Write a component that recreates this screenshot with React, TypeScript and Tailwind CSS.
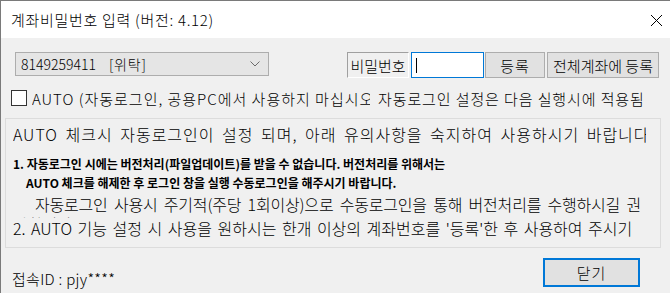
import React from "react";

const font = { fontFamily: '"Noto Sans CJK KR", "Liberation Sans", sans-serif' };

export default function App() {
  return (
    <div
      className="w-[670px] h-[293px] overflow-hidden bg-[#f0f0f0] border-l border-t border-[#7a7a7a] text-[#000] flex flex-col relative font-light"
      style={font}
    >
      {/* title bar */}
      <div className="h-[37px] bg-white flex items-center justify-between pl-[10px] pr-[7px] shrink-0">
        <span className="text-[15px] leading-none tracking-[0.7px] text-[#000]">계좌비밀번호 입력 (버전: 4.12)</span>
        <svg width="13" height="13" viewBox="0 0 13 13" className="mt-[1px]">
          <path d="M1 1 L12 12 M12 1 L1 12" stroke="#000" strokeWidth="1" />
        </svg>
      </div>

      {/* row 1 */}
      <div className="flex items-start mt-[14px] h-[25px] pl-[14px]">
        <div className="w-[254px] h-[24px] bg-[#e5e5e5] border border-[#adadad] flex items-center justify-between pl-[5px] pr-[8px]">
          <span className="text-[14px] leading-none whitespace-nowrap">
            8149259411<span className="ml-[13px] tracking-[0.8px]">[위탁]</span>
          </span>
          <svg width="10" height="6" viewBox="0 0 10 6">
            <path d="M0.5 0.5 L5 5 L9.5 0.5" stroke="#6b6b6b" strokeWidth="1" fill="none" />
          </svg>
        </div>
        <div className="ml-[78px] w-[62px] h-[26px] border-t border-l border-[#a0a0a0] border-b border-r border-b-white border-r-white bg-[#f0f0f0] flex items-center justify-center">
          <span className="text-[15px] leading-none tracking-[0px] whitespace-nowrap">비밀번호</span>
        </div>
        <div className="ml-[2px] w-[73px] h-[26px] bg-white border border-[#0078d7] flex items-center pl-[4px]">
          <div className="w-[1px] h-[15px] bg-black" />
        </div>
        <button className="ml-[1px] w-[60px] h-[26px] bg-[#e1e1e1] border border-[#adadad] flex items-center justify-center">
          <span className="text-[15px] leading-none tracking-[1px]">등록</span>
        </button>
        <button className="ml-[2px] w-[112px] h-[26px] bg-[#e1e1e1] border border-[#adadad] flex items-center justify-center">
          <span className="text-[15px] leading-none whitespace-nowrap tracking-[0px]">전체계좌에 등록</span>
        </button>
      </div>

      {/* checkbox row */}
      <div className="flex items-center mt-[12px] h-[17px] pl-[10px]">
        <div className="w-[16px] h-[16px] bg-white border border-[#333] shrink-0" />
        <div className="ml-[5px] w-[338px] overflow-hidden whitespace-nowrap">
          <span className="text-[15px] leading-none tracking-[1px]">AUTO (자동로그인, 공용PC에서 사용하지 마십시오)</span>
        </div>
        <div className="ml-[8px] whitespace-nowrap">
          <span className="text-[15px] leading-none tracking-[0.9px]">자동로그인 설정은 다음 실행시에 적용됨</span>
        </div>
      </div>

      {/* group box */}
      <div className="ml-[4px] mt-[12px] w-[656px] h-[130px] border border-[#dcdcdc] relative overflow-hidden">
        <div className="absolute left-[7px] top-[5px] w-[633px] overflow-hidden whitespace-nowrap text-[16px] leading-[20px] [word-spacing:3px] tracking-[1px]">
          AUTO 체크시 자동로그인이 설정 되며, 아래 유의사항을 숙지하여 사용하시기 바랍니다.
        </div>
        <div className="absolute left-[7px] top-[37px] whitespace-nowrap text-[12px] font-bold leading-[16px] tracking-[0px]">
          1. 자동로그인 시에는 버전처리(파일업데이트)를 받을 수 없습니다. 버전처리를 위해서는
        </div>
        <div className="absolute left-[20px] top-[56px] whitespace-nowrap text-[12px] font-bold leading-[16px] tracking-[0px]">
          AUTO 체크를 해제한 후 로그인 창을 실행 수동로그인을 해주시기 바랍니다.
        </div>
        <div className="absolute left-[0px] top-[75px] w-[655px] h-[24px] overflow-hidden">
          <div className="pl-[29px] whitespace-nowrap text-[16px] leading-[20px] [word-spacing:3px] tracking-[-0.2px]">
            자동로그인 사용시 주기적(주당 1회이상)으로 수동로그인을 통해 버전처리를 수행하시길 권
          </div>
          <div className="pl-[7px] whitespace-nowrap text-[16px] leading-[20px]">장합니다.</div>
        </div>
        <div className="absolute left-[7px] top-[99px] w-[635px] overflow-hidden whitespace-nowrap text-[16px] leading-[20px] [word-spacing:2px] bg-[#f0f0f0]">
          2. AUTO 기능 설정 시 사용을 원하시는 한개 이상의 계좌번호를 '등록'한 후 사용하여 주시기
        </div>
      </div>

      {/* bottom row */}
      <div className="flex items-start mt-[10px] pl-[11px]">
        <span className="mt-[13px] text-[15px] leading-none tracking-[0.3px]">접속ID : pjy****</span>
        <button className="ml-auto mr-[30px] w-[97px] h-[29px] bg-[#e1e1e1] border-2 border-[#0078d7] flex items-center justify-center">
          <span className="text-[15px] leading-none tracking-[1px]">닫기</span>
        </button>
      </div>
    </div>
  );
}
